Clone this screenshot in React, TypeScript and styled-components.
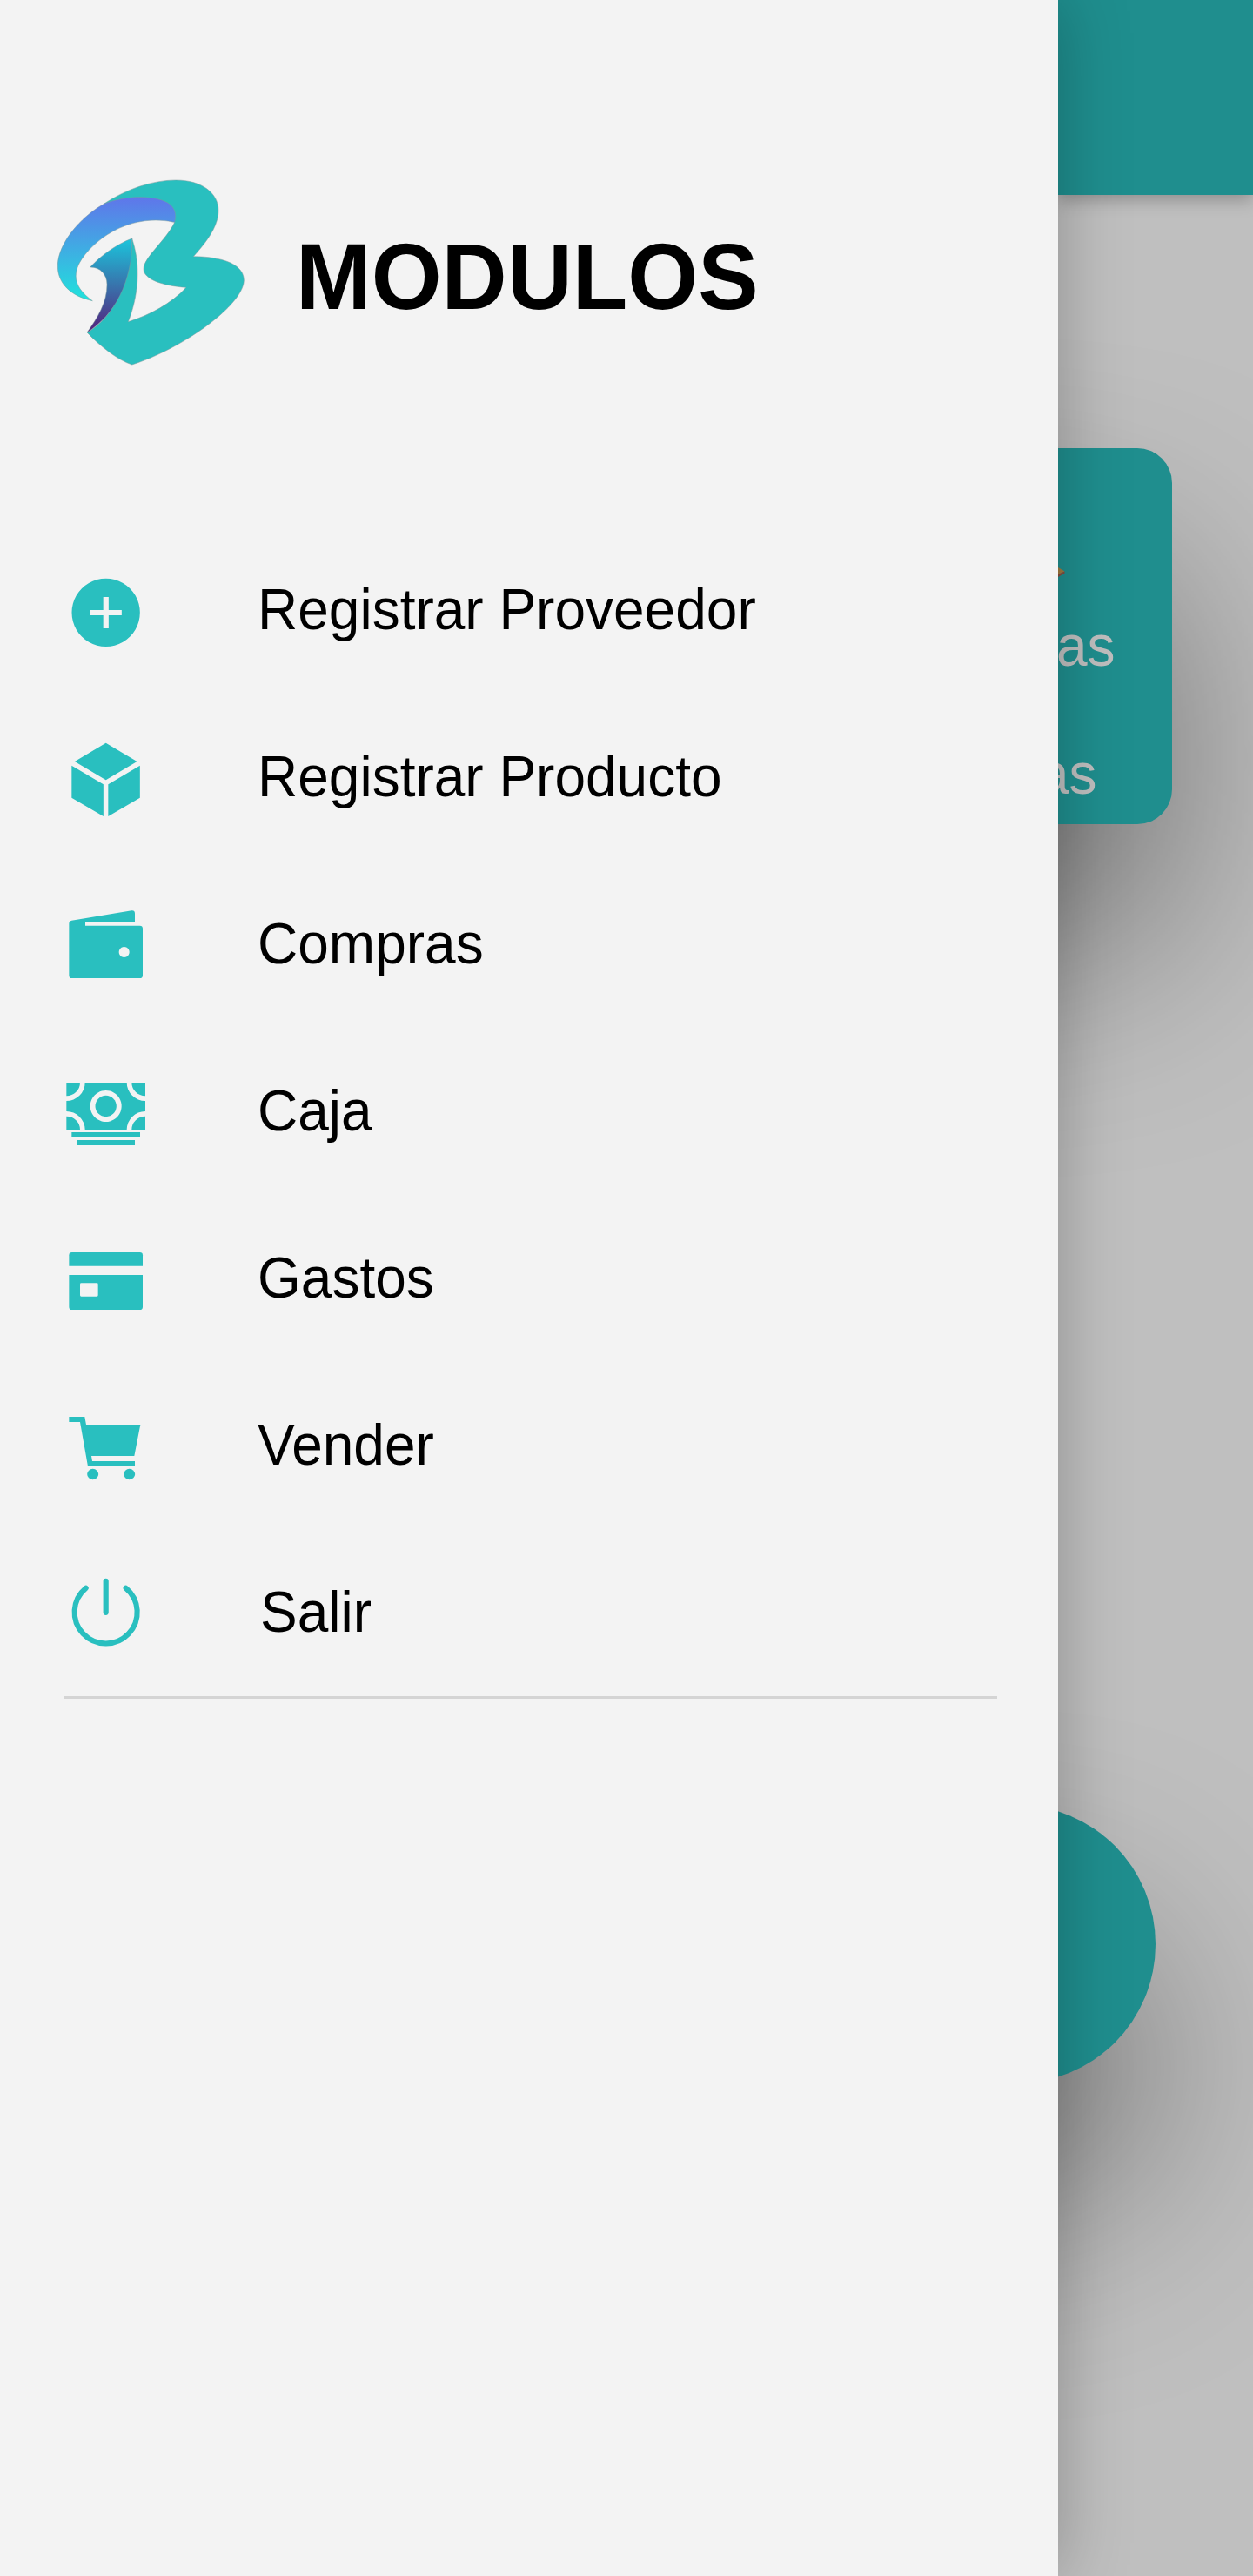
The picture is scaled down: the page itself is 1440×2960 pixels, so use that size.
import React from 'react';
import type { ReactNode } from 'react';
import styled, { createGlobalStyle, css } from 'styled-components';

const GlobalStyle = createGlobalStyle`
  * { box-sizing: border-box; }
  body { margin: 0; background: #bfbfbf; }
`;

const Screen = styled.div`
  display: flex;
  width: 1440px;
  height: 2960px;
  overflow: hidden;
  background: #bfbfbf;
  font-family: 'Liberation Sans', Arial, sans-serif;
`;

const Drawer = styled.aside`
  position: relative;
  z-index: 2;
  flex: none;
  width: 1216px;
  height: 100%;
  background: #f3f3f3;
  box-shadow: 0 0 76px rgba(0, 0, 0, 0.26);
`;

const Brand = styled.header`
  display: flex;
  align-items: center;
  height: 250px;
  margin-top: 190px;
  padding-left: 50px;
`;

const Logo = styled.svg`
  flex: none;
  width: 250px;
  height: 250px;
`;

const Title = styled.h1`
  margin: 5px 0 0 40px;
  font-size: 104px;
  line-height: 120px;
  font-weight: 700;
  color: #000;
  transform: scaleY(1.04);
`;

const Menu = styled.nav`
  display: flex;
  flex-direction: column;
  height: 1344px;
  margin: 168px 70px 0 73px;
  border-bottom: 3px solid #d4d4d4;
`;

const MenuItem = styled.a`
  display: flex;
  align-items: center;
  flex: none;
  height: 192px;
`;

const Icon = styled.svg`
  flex: none;
  width: 96px;
  height: 96px;
  margin-left: 1px;
  fill: #29bfbf;
`;

const Label = styled.span<{ $indent?: number }>`
  margin-left: ${(p) => 126 + (p.$indent ?? 0)}px;
  margin-top: -8px;
  font-size: 64px;
  line-height: 76px;
  color: #000;
  transform: scaleY(1.04);
`;

const Backdrop = styled.main`
  position: relative;
  z-index: 0;
  display: flex;
  flex-direction: column;
  align-items: flex-start;
  flex: 1;
  min-width: 0;
`;

const TopBar = styled.div`
  width: 100%;
  height: 224px;
  background: #1f8e8e;
  box-shadow: 0 6px 18px rgba(0, 0, 0, 0.25);
`;

const softShadow = css`
  position: relative;

  &::before {
    content: '';
    position: absolute;
    z-index: -1;
    inset: 140px 0 -140px;
    border-radius: inherit;
    background: rgba(0, 0, 0, 0.4);
    filter: blur(120px);
    will-change: transform;
  }
`;

const Card = styled.section`
  ${softShadow}
  display: flex;
  flex-direction: column;
  align-items: flex-start;
  width: 531px;
  height: 432px;
  margin: 291px 0 0 -400px;
  padding: 137px 0 0 400px;
  border-radius: 40px;
  background: #1f8e8e;
`;

const CardArt = styled.svg`
  display: block;
  width: 8px;
  height: 12px;
`;

const CardText = styled.span<{ $gap: number; $shift: number }>`
  margin: ${(p) => p.$gap}px 0 0 ${(p) => p.$shift}px;
  font-size: 64px;
  line-height: 74px;
  color: #bfbfbf;
  transform: scaleY(1.04);
`;

const RoundButton = styled.div`
  ${softShadow}
  width: 320px;
  height: 320px;
  margin: 1127px 0 0 -208px;
  border-radius: 50%;
  background: #1f8e8e;
`;

type Item = { label: string; viewBox: string; art: ReactNode; indent?: number };

const items: Item[] = [
  {
    label: 'Registrar Proveedor',
    viewBox: '42 18 288 288',
    art: (
      <path
        fillRule="evenodd"
        d="M185 44a117.500 117.500 0 1 0 .01 0ZM176 108H194.500V153H239.500V171H194.500V216H176V171H131V153H176Z"
      />
    ),
  },
  {
    label: 'Registrar Producto',
    viewBox: '42 594 288 288',
    art: (
      <path d="M185 611.500L292.500 675L185 738.500L77.500 675ZM67 689L176.500 754V864L67 800ZM302.500 689V800L193 864V754Z" />
    ),
  },
  {
    label: 'Compras',
    viewBox: '42 30 288 288',
    art: (
      <path
        fillRule="evenodd"
        d="M67 83L274 49Q285 48 285 59V88H114V101H302Q312 101 312 111V272Q312 282 302 282H68Q58 282 58 272V94Q58 85 67 83ZM248 174a18 18 0 1 0 .01 0Z"
      />
    ),
  },
  {
    label: 'Caja',
    viewBox: '42 606 288 288',
    art: (
      <>
        <path
          fillRule="evenodd"
          d="M113 642H257A64 63 0 0 0 321 705V741A64 63 0 0 0 257 804H113A64 63 0 0 0 49 741V705A64 63 0 0 0 113 642ZM185 669a54 54 0 1 0 .01 0Z"
        />
        <path d="M49 642H96A47 45.500 0 0 1 49 687.500ZM274 642H321V687.500A47 45.500 0 0 1 274 642ZM49 758.500A47 45.500 0 0 1 96 804H49ZM321 758.500V804H274A47 45.500 0 0 1 321 758.500Z" />
        <circle cx="185" cy="723" r="36.500" />
        <path d="M67 813H303V831H67ZM85 840H285V858H85Z" />
      </>
    ),
  },
  {
    label: 'Gastos',
    viewBox: '42 12 288 288',
    art: (
      <>
        <path d="M58 104V67Q58 57 68 57H302Q312 57 312 67V104Z" />
        <path
          fillRule="evenodd"
          d="M58 135H312V245Q312 255 302 255H68Q58 255 58 245ZM100 163Q96 163 96 167V205Q96 209 100 209H154Q158 209 158 205V167Q158 163 154 163Z"
        />
      </>
    ),
  },
  {
    label: 'Vender',
    viewBox: '42 588 288 288',
    art: (
      <>
        <path d="M58 624H112L117 651H304L283 759H135L138 777H285V795H123L96 642H58Z" />
        <ellipse cx="140" cy="822" rx="19.500" ry="18.500" />
        <ellipse cx="266" cy="822" rx="19.500" ry="18.500" />
      </>
    ),
  },
  {
    label: 'Salir',
    viewBox: '42 54 288 288',
    indent: 3,
    art: (
      <path
        fill="none"
        stroke="#29bfbf"
        strokeWidth="18.500"
        strokeLinecap="round"
        d="M185 80.500V188.500M116 104.500A108 108 0 1 0 254 104.500"
      />
    ),
  },
];

function BrandLogo() {
  return (
    <Logo viewBox="0 0 750 750">
      <defs>
        <linearGradient id="swoosh" x1="0" y1="110" x2="0" y2="467" gradientUnits="userSpaceOnUse">
          <stop offset="0" stopColor="#5f76ea" />
          <stop offset="1" stopColor="#1fe3dc" />
        </linearGradient>
        <linearGradient id="stem" x1="0" y1="252" x2="0" y2="576" gradientUnits="userSpaceOnUse">
          <stop offset="0" stopColor="#1bc6dc" />
          <stop offset="1" stopColor="#55207c" />
        </linearGradient>
      </defs>
      <g strokeWidth="1.5" strokeLinejoin="round" stroke="#7d9a9c">
        <path
          fill="#29bfbf"
          d="M208 133C285 82 375 51 457 51C545 51 603 95 603 155C603 210 563 263 517 314C620 315 691 342 691 396C691 480 480 632 305 687C256 671 198 626 150 576C240 530 303 390 305 252C335 340 329 446 292 539C365 517 441 476 492 421C410 415 345 393 345 357C345 318 426 254 452 196Z"
        />
        <path
          fill="url(#swoosh)"
          d="M452 196C310 165 188 241 132 323C95 379 109 424 169 467C92 450 49 406 49 347C49 270 125 180 208 133C275 105 360 105 405 119C447 132 462 158 452 196Z"
        />
        <path
          fill="url(#stem)"
          d="M161 351C199 310 250 273 305 252C308 400 244 518 150 576C186 526 219 473 219 411C219 376 195 350 161 351Z"
        />
      </g>
    </Logo>
  );
}

export default function App() {
  return (
    <>
      <GlobalStyle />
      <Screen>
        <Drawer>
          <Brand>
            <BrandLogo />
            <Title>MODULOS</Title>
          </Brand>
          <Menu>
            {items.map(({ label, viewBox, art, indent }) => (
              <MenuItem key={label}>
                <Icon viewBox={viewBox}>{art}</Icon>
                <Label $indent={indent}>{label}</Label>
              </MenuItem>
            ))}
          </Menu>
        </Drawer>
        <Backdrop>
          <TopBar />
          <Card>
            <CardArt viewBox="0 0 8 12">
              <path d="M0 0L7.5 4.5L0 8Z" fill="#a17a3f" />
              <path d="M0 8L7.5 4.5V6.5L0 11Z" fill="#8c4a3c" />
            </CardArt>
            <CardText $gap={41} $shift={-2}>as</CardText>
            <CardText $gap={73} $shift={-23}>as</CardText>
          </Card>
          <RoundButton />
        </Backdrop>
      </Screen>
    </>
  );
}
